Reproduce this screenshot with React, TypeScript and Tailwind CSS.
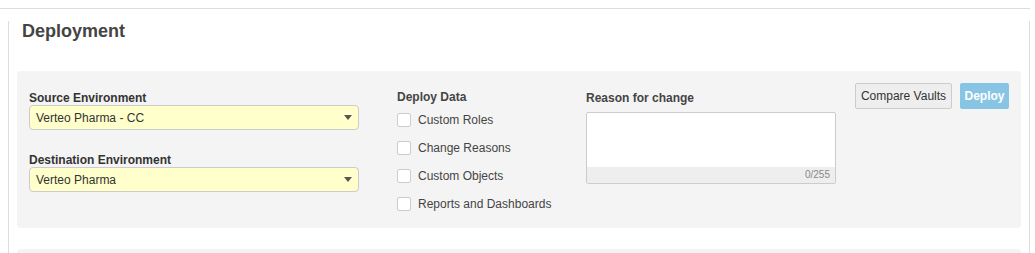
import React from 'react';

const font = { fontFamily: '"Liberation Sans", Arial, sans-serif' };

const Select: React.FC<{ value: string }> = ({ value }) => (
    <div className="flex items-center justify-between h-[25px] w-[330px] rounded-[4px] border border-[#cccccc] bg-[#ffffcc] pl-[6px] pr-[6px] text-[12px] text-[#333]">
        <span>{value}</span>
        <span className="w-0 h-0 border-l-[4px] border-r-[4px] border-t-[5px] border-l-transparent border-r-transparent border-t-[#555]" />
    </div>
);

const deployItems = ['Custom Roles', 'Change Reasons', 'Custom Objects', 'Reports and Dashboards'];

export default function App() {
    return (
        <div className="w-[1035px] h-[253px] bg-white overflow-hidden" style={font}>
            <div className="mt-2 w-[1030px] h-[245px] border-t border-[#dddddd]">
                <div className="ml-2 w-[1022px] h-full border-l border-r border-[#dddddd] px-2">
                    {/* Header */}
                    <h1 className="ml-[5px] mt-[12px] text-[18px] leading-[20px] font-bold text-[#444]">Deployment</h1>

                    {/* Panel */}
                    <div className="mt-[30px] h-[157px] rounded-[4px] bg-[#f4f4f4] flex items-start px-3 pt-3">
                        <div className="w-[330px] mt-[8px]">
                            <div className="text-[12px] leading-[14px] font-bold text-[#333]">Source Environment</div>
                            <Select value="Verteo Pharma - CC" />
                            <div className="mt-[23px] text-[12px] leading-[14px] font-bold text-[#333]">Destination Environment</div>
                            <Select value="Verteo Pharma" />
                        </div>

                        <div className="ml-[38px] w-[189px] mt-[7px]">
                            <div className="text-[12px] leading-[14px] font-bold text-[#444]">Deploy Data</div>
                            <div className="mt-[2px]">
                                {deployItems.map((item) => (
                                    <div key={item} className="flex items-center h-[28px]">
                                        <span className="w-[14px] h-[14px] rounded-[2px] border border-[#cccccc] bg-white" />
                                        <span className="ml-[7px] text-[12px] text-[#444]">{item}</span>
                                    </div>
                                ))}
                            </div>
                        </div>

                        <div className="w-[250px] mt-[8px]">
                            <div className="text-[12px] leading-[14px] font-bold text-[#444]">Reason for change</div>
                            <div className="mt-[7px] h-[72px] border border-[#cccccc] rounded-[2px] bg-white flex flex-col">
                                <div className="flex-1" />
                                <div className="h-[16px] bg-[#eeeeee] text-right pr-[5px] text-[10px] leading-[16px] text-[#888]">0/255</div>
                            </div>
                        </div>

                        <div className="ml-auto flex gap-2">
                            <button className="h-[26px] w-[97px] border border-[#cccccc] rounded-[2px] bg-[#eeeeee] text-[12px] text-[#333]">Compare Vaults</button>
                            <button className="h-[26px] w-[49px] rounded-[2px] bg-[#88c4e4] text-[12px] font-bold text-white">Deploy</button>
                        </div>
                    </div>

                    <div className="mt-[21px] h-[20px] rounded-[4px] bg-[#f4f4f4]" />
                </div>
            </div>
        </div>
    );
}
